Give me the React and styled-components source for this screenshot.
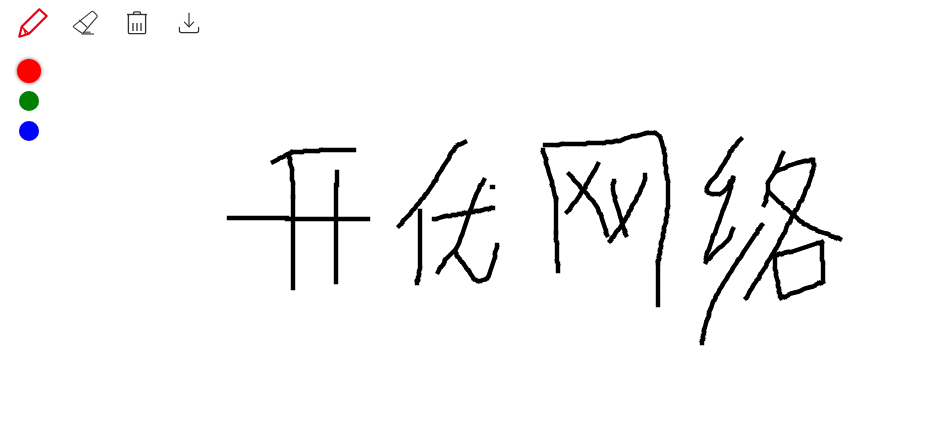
import React, { useState } from 'react';
import styled, { createGlobalStyle } from 'styled-components';

const GlobalStyle = createGlobalStyle`
  html, body {
    margin: 0;
    padding: 0;
    background: #fff;
    font-family: "Liberation Sans", sans-serif;
  }
`;

const Page = styled.div`
  position: relative;
  width: 926px;
  height: 448px;
  overflow: hidden;
  background: #fff;
`;

// the drawing surface fills the page, tools float over it
const Canvas = styled.svg`
  position: absolute;
  inset: 0;
  width: 926px;
  height: 448px;
`;

const Tools = styled.div`
  position: relative;
  display: flex;
  flex-direction: column;
  width: 220px;
`;

const Toolbar = styled.div`
  display: flex;
  height: 46px;
  padding-left: 7px;
`;

const ToolButton = styled.button`
  display: flex;
  align-items: center;
  justify-content: center;
  width: 52px;
  height: 46px;
  padding: 0;
  border: none;
  background: none;
  cursor: pointer;
  color: ${(p) => (p.$active ? '#e60012' : '#333')};
`;

const Palette = styled.div`
  display: flex;
  flex-direction: column;
  width: 58px;
  margin-top: 10px;
`;

const SwatchRow = styled.div`
  display: flex;
  align-items: center;
  justify-content: center;
  height: 30px;
`;

const Swatch = styled.button`
  width: ${(p) => (p.$active ? 24 : 20)}px;
  height: ${(p) => (p.$active ? 24 : 20)}px;
  padding: 0;
  border: none;
  border-radius: 50%;
  background: ${(p) => p.$color};
  box-shadow: 0 0 ${(p) => (p.$active ? '3px 1px' : '1px 0')} rgba(150, 90, 90, ${(p) => (p.$active ? 0.6 : 0.3)});
  cursor: pointer;
`;

const PencilIcon = () => (
  <svg width="30" height="30" viewBox="0 0 30 30" fill="none" stroke="currentColor" strokeWidth="2.2" strokeLinejoin="round">
    <path d="M1.3 28.7 3.7 18.7 21.3 1.3 28.7 8 11 25.7Z" />
    <path d="M3.7 18.7 11 25.7M5.5 20 8 27" strokeWidth="1.5" />
  </svg>
);

const EraserIcon = () => (
  <svg width="26" height="26" viewBox="0 0 26 26" fill="none" stroke="currentColor" strokeWidth="1.1" strokeLinejoin="round">
    <path d="M19.6 1.6Q20.7 .8 21.6 1.8L24.8 5.2Q25.6 6.2 24.8 7.2L11.6 22.6Q10.6 23.8 9.4 22.8L2 17.6Q.8 16.6 2 15.6Z" />
    <path d="M7.3 10 15.3 17.3" />
    <path d="M9.6 24H22" />
    <path d="M11.6 22.4H18.6" strokeWidth="1.8" opacity="0.7" />
  </svg>
);

const TrashIcon = () => (
  <svg width="26" height="26" viewBox="0 0 26 26" fill="none" stroke="currentColor" strokeWidth="1.35" strokeLinejoin="round">
    <path d="M3 4.5H23" />
    <path d="M4.4 4.5V22.4Q4.4 23.6 5.6 23.6H20.4Q21.6 23.6 21.6 22.4V4.5" />
    <path d="M9.6 4.5V3Q9.6 1.8 10.8 1.8H15.2Q16.4 1.8 16.4 3V4.5" />
    <path d="M9 13V21M13 13V21M17 13V21" />
  </svg>
);

const DownloadIcon = () => (
  <svg width="26" height="26" viewBox="0 0 26 26" fill="none" stroke="currentColor" strokeWidth="1.2" strokeLinecap="round" strokeLinejoin="round">
    <path d="M13 3V16.6" />
    <path d="M8.4 12.2 13 16.8 17.6 12.2" />
    <path d="M3.4 17.4V20.6Q3.4 22.6 5.4 22.6H20.6Q22.6 22.6 22.6 20.6V17.4" />
  </svg>
);

const tools = [
  { id: 'pen', Icon: PencilIcon },
  { id: 'eraser', Icon: EraserIcon },
  { id: 'clear', Icon: TrashIcon },
  { id: 'save', Icon: DownloadIcon },
];

const colors = ['#ff0000', '#008000', '#0000ff'];

// handwritten strokes, in page coordinates
const strokes = [
  // 开
  [[273, 162], [288, 154], [297, 152], [330, 150], [354, 150]],
  [[289, 155], [292, 173], [293, 197]],
  [[293, 197], [293, 288]],
  [[337, 172], [337, 185]],
  [[336, 185], [336, 282]],
  [[229, 218], [287, 218]],
  [[287, 219], [368, 219]],
  // 优
  [[465, 142], [455, 148], [440, 172], [427, 193], [399, 226]],
  [[420, 211], [420, 263], [417, 283]],
  [[434, 219], [453, 215], [473, 212], [493, 208]],
  [[484, 180], [477, 193], [467, 220], [457, 247], [447, 258], [438, 272]],
  [[455, 252], [470, 273], [478, 281], [488, 277], [493, 263], [497, 245]],
  [[492, 187], [493, 187]],
  // 网
  [[545, 145], [573, 144], [612, 142], [630, 137], [655, 133], [663, 147], [666, 170], [668, 187], [667, 213], [662, 240], [658, 263]],
  [[658, 263], [658, 305]],
  [[543, 150], [553, 187], [556, 200]],
  [[556, 200], [556, 233]],
  [[556, 233], [558, 271]],
  [[569, 174], [583, 190], [597, 207], [607, 235]],
  [[598, 164], [580, 195], [567, 212]],
  [[614, 181], [614, 195], [626, 235]],
  [[645, 175], [643, 185], [625, 220], [610, 241]],
  // 络
  [[741, 139], [733, 148], [720, 170], [707, 188], [712, 194], [723, 192], [733, 178]],
  [[733, 178], [727, 200], [717, 227], [707, 253], [706, 260]],
  [[706, 262], [717, 250], [728, 240], [733, 229]],
  [[762, 225], [743, 253], [718, 293], [707, 320], [702, 343]],
  [[783, 153], [775, 172], [768, 183], [768, 192], [764, 205]],
  [[775, 172], [797, 163], [813, 160]],
  [[813, 160], [813, 170], [803, 197], [792, 217], [775, 250], [746, 298]],
  [[770, 193], [793, 215], [810, 227], [840, 239]],
  [[775, 255], [797, 250], [822, 242]],
  [[822, 244], [823, 281]],
  [[823, 282], [781, 298]],
  [[780, 296], [775, 267], [775, 255]],
];

// mouse-like sampling: a smooth curve through the points, cut into short
// segments on whole pixels, each drawn on its own like a canvas lineTo
const toPath = (pts) => {
  const samples = [];
  for (let i = 0; i < pts.length - 1; i++) {
    const p0 = pts[i - 1] || pts[i];
    const p1 = pts[i];
    const p2 = pts[i + 1];
    const p3 = pts[i + 2] || p2;
    const steps = Math.max(1, Math.round(Math.hypot(p2[0] - p1[0], p2[1] - p1[1]) / 3));
    for (let s = 0; s < steps; s++) {
      const t = s / steps;
      const at = (k) =>
        0.5 * (2 * p1[k] + (p2[k] - p0[k]) * t +
          (2 * p0[k] - 5 * p1[k] + 4 * p2[k] - p3[k]) * t * t +
          (3 * p1[k] - p0[k] - 3 * p2[k] + p3[k]) * t * t * t);
      samples.push([Math.round(at(0)), Math.round(at(1))]);
    }
  }
  samples.push(pts[pts.length - 1]);
  let d = '';
  for (let i = 0; i < samples.length - 1; i++) {
    d += `M${samples[i][0]} ${samples[i][1]}L${samples[i + 1][0]} ${samples[i + 1][1]}`;
  }
  return d;
};

const App = () => {
  const [tool, setTool] = useState('pen');
  const [color, setColor] = useState(colors[0]);

  return (
    <Page>
      <GlobalStyle />
      <Canvas viewBox="0 0 926 448" fill="none" stroke="#000" strokeWidth="4.4" strokeLinecap="square">
        {strokes.map((pts) => (
          <path key={pts.join()} d={toPath(pts)} />
        ))}
      </Canvas>
      <Tools>
        <Toolbar>
          {tools.map(({ id, Icon }) => (
            <ToolButton key={id} $active={tool === id} onClick={() => setTool(id)}>
              <Icon />
            </ToolButton>
          ))}
        </Toolbar>
        <Palette>
          {colors.map((c) => (
            <SwatchRow key={c}>
              <Swatch $color={c} $active={color === c} onClick={() => setColor(c)} />
            </SwatchRow>
          ))}
        </Palette>
      </Tools>
    </Page>
  );
};

export default App;
